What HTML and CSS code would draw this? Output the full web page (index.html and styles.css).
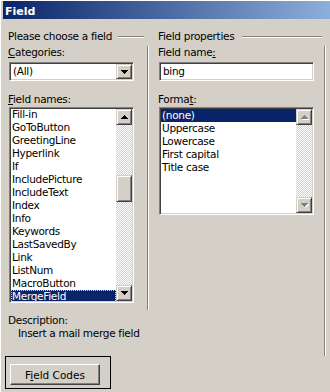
FILE: index.html
```html
<!DOCTYPE html>
<html lang="en">
<head>
  <meta charset="UTF-8" />
  <title>Field</title>
  <link rel="stylesheet" href="styles.css">
</head>
<body>
  <div class="window">
    <div class="titlebar">Field</div>

    <div class="panels">
      <div class="group group-left">
        <div class="group-head"><span>Please choose a field</span><i class="etch"></i></div>
        <div class="group-body">
          <div class="label"><u>C</u>ategories:</div>
          <div class="combo sunken">
            <span class="combo-text">(All)</span>
            <span class="sb-btn"><svg width="7" height="4"><path d="M0 0h7v1h-1v1h-1v1h-1v1h-1v-1h-1v-1h-1v-1h-1z"/></svg></span>
          </div>
          <div class="label spaced"><u>F</u>ield names:</div>
          <div class="listbox sunken names">
            <ul class="items">
              <li>Fill-in</li>
              <li>GoToButton</li>
              <li>GreetingLine</li>
              <li>Hyperlink</li>
              <li>If</li>
              <li>IncludePicture</li>
              <li>IncludeText</li>
              <li>Index</li>
              <li>Info</li>
              <li>Keywords</li>
              <li>LastSavedBy</li>
              <li>Link</li>
              <li>ListNum</li>
              <li>MacroButton</li>
              <li class="selected focused">MergeField</li>
            </ul>
            <div class="scrollbar">
              <span class="sb-btn"><svg width="7" height="4"><path d="M3 0h1v1h1v1h1v1h1v1h-7v-1h1v-1h1v-1h1z"/></svg></span>
              <span class="sb-track"><span class="sb-btn sb-thumb" style="margin-top:50px;height:27px"></span></span>
              <span class="sb-btn"><svg width="7" height="4"><path d="M0 0h7v1h-1v1h-1v1h-1v1h-1v-1h-1v-1h-1v-1h-1z"/></svg></span>
            </div>
          </div>
        </div>
        <div class="label desc-label">Description:</div>
        <div class="desc">Insert a mail merge field</div>
      </div>

      <div class="group group-right">
        <div class="group-head"><span>Field properties</span><i class="etch"></i></div>
        <div class="group-body">
          <div class="label">Field name<u>:</u></div>
          <div class="textbox sunken">bing</div>
          <div class="label spaced">Forma<u>t</u>:</div>
          <div class="listbox sunken formats">
            <ul class="items">
              <li class="selected">(none)</li>
              <li>Uppercase</li>
              <li>Lowercase</li>
              <li>First capital</li>
              <li>Title case</li>
            </ul>
            <div class="scrollbar disabled">
              <span class="sb-btn"><svg width="7" height="4"><path d="M3 0h1v1h1v1h1v1h1v1h-7v-1h1v-1h1v-1h1z"/></svg></span>
              <span class="sb-track"></span>
              <span class="sb-btn"><svg width="7" height="4"><path d="M0 0h7v1h-1v1h-1v1h-1v1h-1v-1h-1v-1h-1v-1h-1z"/></svg></span>
            </div>
          </div>
        </div>
      </div>
    </div>

    <div class="footer">
      <div class="focus-frame">
        <button class="push">F<u>i</u>eld Codes</button>
      </div>
    </div>
  </div>
</body>
</html>
```

FILE: styles.css
```css
* { box-sizing: border-box; }
body {
  margin: 0;
  background: #d4d0c8;
  font-family: "DejaVu Sans", sans-serif;
  font-size: 10.5px;
  letter-spacing: -0.3px;
  color: #000;
}
u { text-decoration: underline; text-underline-offset: 1px; }
.window {
  width: 330px;
  height: 392px;
  overflow: hidden;
  border-left: 1px solid #fff;
  border-top: 1px solid #fff;
}
.titlebar {
  height: 18px;
  margin-left: 2px;
  padding: 3px 0 0 2px;
  line-height: 15px;
  font-size: 11px;
  font-weight: bold;
  letter-spacing: 0;
  color: #fff;
  background: linear-gradient(to right, #0a246a, #a6caf0 120%);
}

.panels {
  display: flex;
  height: 326px;
  margin-top: 11px;
  padding-left: 7px;
}
.group-head {
  display: flex;
  align-items: center;
  height: 13px;
  line-height: 13px;
  white-space: nowrap;
}
.etch {
  flex: 1;
  height: 2px;
  border-top: 1px solid #808080;
  border-bottom: 1px solid #fff;
}
.group-body {
  border-right: 1px solid #fff;
  box-shadow: inset -1px 0 #808080;
}
.group-left { width: 141px; }
.group-left .etch { margin: 0 5px 0 6px; }
.group-left .group-body { height: 264px; }
.group-right { width: 168px; margin-left: 9px; }
.group-right .etch { margin: 0 4px 0 8px; }
.group-right .group-body { height: 310px; }

.label { height: 13px; line-height: 13px; margin-top: 3px; }
.label.spaced { margin-top: 12px; }
.desc-label { margin-top: 4px; }
.desc { padding-left: 10px; line-height: 13px; }

.sunken {
  background: #fff;
  border: 1px solid;
  border-color: #808080 #fff #fff #808080;
  box-shadow: inset 1px 1px #404040, inset -1px -1px #d4d0c8;
  padding: 1px;
}
.combo, .textbox {
  display: flex;
  height: 19px;
  margin: 3px 0 0 1px;
}
.combo { width: 125px; }
.combo-text { flex: 1; padding-left: 2px; line-height: 15px; }
.textbox { width: 155px; padding-left: 3px; line-height: 15px; }

.listbox { display: flex; margin: 1px 0 0 1px; }
.names { width: 125px; height: 196px; }
.formats { width: 155px; height: 108px; }
.items {
  flex: 1;
  margin: 0;
  padding: 0;
  list-style: none;
  overflow: hidden;
}
.names .items li:first-child { margin-top: -1px; }
.items li { height: 13px; line-height: 13px; padding-left: 1px; white-space: nowrap; }
.items .selected { background: #0a246a; color: #fff; }
.items .focused { outline: 1px dotted #d4d0c8; outline-offset: -1px; }

.scrollbar { display: flex; flex-direction: column; width: 16px; }
.sb-btn {
  display: flex;
  align-items: center;
  justify-content: center;
  width: 16px;
  height: 16px;
  flex: none;
  background: #d4d0c8;
  border: 1px solid;
  border-color: #d4d0c8 #404040 #404040 #d4d0c8;
  box-shadow: inset 1px 1px #fff, inset -1px -1px #808080;
}
.combo .sb-btn { height: 15px; }
.sb-track {
  flex: 1;
  display: flex;
  flex-direction: column;
  background: repeating-conic-gradient(#fff 0 25%, #d4d0c8 0 50%) 0 0 / 2px 2px;
}
.disabled svg { fill: #808080; filter: drop-shadow(1px 1px 0 #fff); }

.footer { padding-left: 4px; }
.focus-frame {
  width: 106px;
  height: 33px;
  border: 1px solid #000;
  padding: 7px 0 0 4px;
}
.push {
  width: 90px;
  height: 21px;
  padding: 0;
  font: inherit;
  color: #000;
  background: #d4d0c8;
  border: 1px solid;
  border-color: #fff #404040 #404040 #fff;
  box-shadow: inset -1px -1px #808080;
}
```
